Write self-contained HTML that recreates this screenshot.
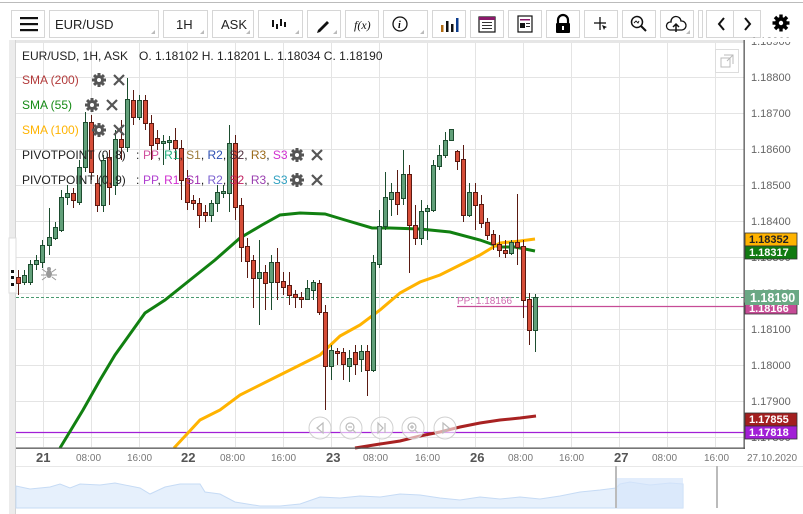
<!DOCTYPE html>
<html><head><meta charset="utf-8"><style>
html,body{margin:0;padding:0;background:#fff;width:803px;height:514px;overflow:hidden;font-family:"Liberation Sans",sans-serif}
svg{position:absolute;left:0;top:0}
</style></head><body>
<svg id="s" width="803" height="514" viewBox="0 0 803 514" font-family="Liberation Sans, sans-serif">
<rect x="0" y="0" width="803" height="514" fill="#fff"/>
<rect x="0" y="2" width="803" height="1" fill="#bbb"/>
<g fill="#fff" stroke="#d6d6d6">
<rect x="11.5" y="10.5" width="33" height="27"/>
<rect x="49.5" y="10.5" width="109" height="27"/>
<rect x="163.5" y="10.5" width="44" height="27"/>
<rect x="212.5" y="10.5" width="41" height="27"/>
<rect x="258.5" y="10.5" width="44" height="27"/>
<rect x="307.5" y="10.5" width="33" height="27"/>
<rect x="345.5" y="10.5" width="33" height="27"/>
<rect x="383.5" y="10.5" width="44" height="27"/>
<rect x="432.5" y="10.5" width="33" height="27"/>
<rect x="470.5" y="10.5" width="33" height="27"/>
<rect x="508.5" y="10.5" width="33" height="27"/>
<rect x="546.5" y="10.5" width="33" height="27"/>
<rect x="584.5" y="10.5" width="33" height="27"/>
<rect x="622.5" y="10.5" width="33" height="27"/>
<rect x="660.5" y="10.5" width="33" height="27"/>
<rect x="698.5" y="10.5" width="4" height="27"/>
<rect x="706.5" y="10.5" width="54" height="27"/>
</g>
<line x1="733.5" y1="11" x2="733.5" y2="37" stroke="#d6d6d6"/>
<g fill="#bbb">
<path d="M155 34 l-4 0 l4 -4z"/><path d="M204 34 l-4 0 l4 -4z"/><path d="M250 34 l-4 0 l4 -4z"/>
<path d="M299 34 l-4 0 l4 -4z"/><path d="M337 34 l-4 0 l4 -4z"/><path d="M424 34 l-4 0 l4 -4z"/><path d="M690 34 l-4 0 l4 -4z"/>
</g>
<g fill="#111"><rect x="20" y="17" width="18" height="2.2"/><rect x="20" y="23" width="18" height="2.2"/><rect x="20" y="29" width="18" height="2.2"/></g>
<text x="55" y="29" font-size="13" fill="#222">EUR/USD</text>
<text x="176" y="29" font-size="13" fill="#222">1H</text>
<text x="221" y="29" font-size="13" fill="#222">ASK</text>
<g fill="#111"><rect x="272" y="20" width="2" height="7"/><rect x="276" y="24" width="2" height="5"/><rect x="280" y="19" width="2" height="7"/><rect x="284" y="22" width="2" height="5"/></g>
<path d="M318 30 l9 -9 l2 2 l-9 9 l-3 1z" fill="#111"/>
<text x="354" y="29" font-size="12" font-style="italic" font-family="Liberation Serif, serif" fill="#111">f(x)</text>
<circle cx="400" cy="24" r="7" fill="none" stroke="#111" stroke-width="1.3"/><text x="398" y="28" font-size="10" font-style="italic" font-family="Liberation Serif,serif" font-weight="bold">i</text>
<g><rect x="441" y="25" width="2.5" height="7" fill="#b06a10"/><rect x="446" y="21" width="2.5" height="11" fill="#111"/><rect x="451" y="24" width="2.5" height="8" fill="#111"/><rect x="456" y="18" width="2.5" height="14" fill="#0b3b8c"/></g>
<rect x="479" y="17" width="16" height="15" fill="#fff" stroke="#111" stroke-width="1.2"/><rect x="479" y="17" width="16" height="3" fill="#8a1a6a"/>
<g fill="#333"><rect x="482" y="22" width="10" height="1"/><rect x="482" y="25" width="10" height="1"/><rect x="482" y="28" width="10" height="1"/></g>
<rect x="518" y="16" width="14" height="16" fill="#fff" stroke="#111" stroke-width="1.2"/><rect x="520" y="19" width="10" height="1.5" fill="#8a1a6a"/><rect x="520" y="23" width="5" height="5" fill="#111"/><rect x="526" y="23" width="4" height="1" fill="#333"/><rect x="526" y="26" width="4" height="1" fill="#333"/>
<path d="M558 23 v-3 a5 5 0 0 1 10 0 v3" fill="none" stroke="#000" stroke-width="2.2"/><rect x="556" y="23" width="14" height="10" rx="1" fill="#000"/><rect x="562" y="26" width="2" height="4" fill="#fff"/>
<g stroke="#111" stroke-width="1.3"><line x1="600" y1="17" x2="600" y2="30"/><line x1="594" y1="23" x2="606" y2="23"/></g><path d="M602 25 l5 2 l-2 1 l-1 2z" fill="#111"/>
<circle cx="637" cy="22" r="5.5" fill="none" stroke="#111" stroke-width="1.5"/><line x1="641" y1="26" x2="646" y2="31" stroke="#111" stroke-width="2"/><path d="M634 23 l2 -2 l2 2 l1 -2" fill="none" stroke="#111" stroke-width="0.9"/>
<path d="M670 30 a4 4 0 0 1 1 -8 a5 5 0 0 1 10 -1 a4 4 0 0 1 1 9z" fill="none" stroke="#111" stroke-width="1.3"/><path d="M676 32 v-7 M673 27 l3 -3 l3 3" fill="none" stroke="#111" stroke-width="1.5"/>
<path d="M724 18 l-5 6 l5 6" fill="none" stroke="#111" stroke-width="2"/><path d="M745 18 l5 6 l-5 6" fill="none" stroke="#111" stroke-width="2"/>
<g transform="translate(781 23)"><circle r="6" fill="#000"/><g fill="#000"><rect x="-1.7" y="-8.5" width="3.4" height="17"/><rect x="-8.5" y="-1.7" width="17" height="3.4"/><rect x="-1.7" y="-8.5" width="3.4" height="17" transform="rotate(45)"/><rect x="-1.7" y="-8.5" width="3.4" height="17" transform="rotate(-45)"/></g><circle r="2.2" fill="#fff"/></g>
<g id="grid" stroke="#e4e4e4" stroke-width="1"></g>
<g id="plabels" font-size="11" fill="#666"></g>
<rect x="9" y="38" width="794" height="4" fill="#fff"/>
<rect x="9" y="40" width="735" height="3" fill="#e6e6e6"/>
<rect x="9" y="40" width="6" height="474" fill="#ececec"/>
<rect x="15" y="40" width="1" height="474" fill="#d4d4d4"/>
<rect x="9" y="238" width="7" height="55" fill="#fff" stroke="#ddd"/>
<g fill="#111"><rect x="11" y="270" width="3" height="3"/><rect x="11" y="276" width="3" height="3"/><rect x="11" y="283" width="3" height="3"/></g>
<line x1="16" y1="432.5" x2="744" y2="432.5" stroke="#a11fd6" stroke-width="1.3"/>
<line x1="16" y1="297.5" x2="744" y2="297.5" stroke="#4a9a70" stroke-dasharray="3,2" stroke-width="1"/>
<line x1="457" y1="306.5" x2="744" y2="306.5" stroke="#c64b96" stroke-width="1.3"/>
<text x="457" y="304" font-size="10" fill="#d06ab0">PP: 1.18166</text>
<polyline fill="none" stroke="#118011" stroke-width="3" points="60,448 83,410 100,380 115,355 145,313 165,300 190,280 215,260 240,238 262,225 280,215 300,213 325,214 345,220 372,228 390,228 420,229 450,232 480,240 500,247 515,247 535,251"/>
<polyline fill="none" stroke="#ffb300" stroke-width="3" points="174,448 200,420 220,410 240,395 280,375 320,355 340,336 360,325 380,310 400,293 420,282 440,275 460,265 480,255 500,243 520,241 535,239"/>
<polyline fill="none" stroke="#a82222" stroke-width="3" points="355,448 380,444 400,441 420,436 440,432 460,427 480,423 500,420 520,418 536,416"/>
<g id="candles"></g>
<g fill="#fff" fill-opacity="0.6" stroke="#d0d0d0">
<circle cx="320" cy="428" r="11"/><circle cx="351" cy="428" r="11"/><circle cx="382" cy="428" r="11"/><circle cx="413" cy="428" r="11"/><circle cx="445" cy="428" r="11"/>
</g>
<g fill="none" stroke="#bbb" stroke-width="1.2">
<path d="M323 423 l-6 5 l6 5z"/><circle cx="350" cy="427" r="4"/><line x1="353" y1="430" x2="356" y2="433"/><line x1="348" y1="427" x2="352" y2="427"/>
<path d="M378 423 l5 5 l-5 5z M385 423 v10"/><circle cx="412" cy="427" r="4"/><line x1="415" y1="430" x2="418" y2="433"/><path d="M410 427 h4 M412 425 v4"/><path d="M443 423 l6 5 l-6 5z"/>
</g>
<rect x="743.5" y="40" width="1.3" height="409" fill="#555"/>
<rect x="16" y="447.5" width="729" height="1.3" fill="#555"/>
<g font-size="11" font-weight="bold">
<rect x="745" y="233" width="52" height="13" fill="#ffb300" stroke="#333" stroke-width="0.8"/><text x="749" y="243" fill="#222">1.18352</text>
<rect x="745" y="246" width="52" height="13" fill="#117a11" stroke="#333" stroke-width="0.8"/><text x="749" y="256" fill="#fff">1.18317</text>
<rect x="745" y="303" width="52" height="11" fill="#c64b96" stroke="#333" stroke-width="0.8"/><text x="749" y="312" fill="#fff">1.18166</text>
<rect x="745" y="290" width="54" height="15" fill="#6aa884"/><text x="750" y="302" font-size="12.5" fill="#fff">1.18190</text>
<rect x="745" y="413" width="52" height="13" fill="#a31f1f" stroke="#333" stroke-width="0.8"/><text x="749" y="423" fill="#fff">1.17855</text>
<rect x="745" y="426" width="52" height="13" fill="#a11fd6" stroke="#333" stroke-width="0.8"/><text x="749" y="436" fill="#fff">1.17818</text>
</g>
<g font-size="10" fill="#777">
<text x="76" y="461">08:00</text><text x="127" y="461">16:00</text><text x="220" y="461">08:00</text><text x="271" y="461">16:00</text>
<text x="363" y="461">08:00</text><text x="415" y="461">16:00</text><text x="508" y="461">08:00</text><text x="559" y="461">16:00</text>
<text x="652" y="461">08:00</text><text x="704" y="461">16:00</text><text x="747" y="461">27.10.2020</text>
</g>
<g font-size="13" font-weight="bold" fill="#555"><text x="36" y="462">21</text><text x="181" y="462">22</text><text x="326" y="462">23</text><text x="470" y="462">26</text><text x="614" y="462">27</text></g>
<rect x="16" y="466" width="787" height="1" fill="#e8e8e8"/>
<path d="M16 508 V486 L30 489 L50 487 L60 484 L70 488 L80 484 L100 485 L115 483 L140 488 L150 494 L165 487 L180 484 L200 484 L205 492 L220 494 L235 502 L260 506 L280 506 L300 504 L320 497 L340 498 L360 496 L380 497 L400 494 L420 495 L440 498 L460 500 L480 497 L500 499 L520 497 L540 499 L560 496 L580 492 L600 490 L616 488 L620 484 L630 482 L650 485 L670 483 L683 484 V508Z" fill="#e6f0fc" stroke="#c6dbf5"/>
<rect x="616" y="478" width="67" height="30" fill="#d6e6fb" opacity="0.7"/>
<rect x="615" y="466" width="2" height="42" fill="#bbb"/><rect x="716" y="466" width="2" height="42" fill="#bbb"/>
<g font-size="12">
<text y="60" fill="#222"><tspan x="22">EUR/USD, 1H, ASK</tspan><tspan x="139">O. 1.18102 H. 1.18201 L. 1.18034 C. 1.18190</tspan></text>
<text x="22" y="84" fill="#b23a3a">SMA (200)</text>
<text x="22" y="109" fill="#148a14">SMA (55)</text>
<text x="22" y="134" fill="#ffb300">SMA (100)</text>
<text y="159" fill="#222"><tspan x="22">PIVOTPOINT (0, 8)</tspan><tspan x="136">: </tspan><tspan x="143" fill="#d04f9e">PP</tspan>, <tspan fill="#1fae7a">R1</tspan>, <tspan fill="#9b7a3a">S1</tspan>, <tspan fill="#2c4fb2">R2</tspan>, <tspan fill="#4b2a3a">S2</tspan>, <tspan fill="#9b6a1a">R3</tspan>, <tspan fill="#d02fd0">S3</tspan></text>
<text y="184" fill="#222"><tspan x="22">PIVOTPOINT (0, 9)</tspan><tspan x="136">: </tspan><tspan x="143" fill="#b03fd0">PP</tspan>, <tspan fill="#d02fd0">R1</tspan>, <tspan fill="#a02fb0">S1</tspan>, <tspan fill="#7a5fd0">R2</tspan>, <tspan fill="#c02060">S2</tspan>, <tspan fill="#9a3fb0">R3</tspan>, <tspan fill="#2fa0c0">S3</tspan></text>
</g>
<g id="icons"></g>
<rect x="715.5" y="49.5" width="23" height="23" fill="#fff" stroke="#ddd"/>
<rect x="721" y="58" width="9" height="9" fill="none" stroke="#bbb"/><path d="M724 55 h9 v9 M727 61 l6 -6" fill="none" stroke="#bbb"/>
<g transform="translate(49 274)" fill="#999"><ellipse rx="3" ry="4"/><circle cy="-5" r="2"/><path d="M-3 -2 l-4 -3 M3 -2 l4 -3 M-3 1 l-5 0 M3 1 l5 0 M-3 3 l-4 3 M3 3 l4 3" stroke="#999" stroke-width="1"/></g>
</svg>
<script>
var NS="http://www.w3.org/2000/svg",s=document.getElementById('s');
function el(p,t,a){var e=document.createElementNS(NS,t);for(var k in a)e.setAttribute(k,a[k]);p.appendChild(e);return e;}
var g=document.getElementById('grid');
for(var x=43;x<744;x+=48)el(g,'line',{x1:x+.5,y1:43,x2:x+.5,y2:447});
var ys=[41,77,113,149,185,221,257,293,329,365,401,437];
for(var i=0;i<ys.length;i++){el(g,'line',{x1:16,y1:ys[i]+.5,x2:744,y2:ys[i]+.5});}
var pl=document.getElementById('plabels');
var pv=['1.18900','1.18800','1.18700','1.18600','1.18500','1.18400','1.18300','1.18200','1.18100','1.18000','1.17900','1.17800'];
for(i=0;i<ys.length;i++){var t=el(pl,'text',{x:751,y:ys[i]+4});t.textContent=pv[i];}
var d=[[18,277,283,270,295],[24,282,275,270,285],[30,282,264,260,285],[36,264,260,255,270],[42,262,245,240,268],[49,245,237,208,255],[55,238,227,222,240],[61,230,197,190,232],[67,197,193,185,205],[73,193,200,188,208],[79,202,167,160,205],[85,167,122,112,172],[91,122,172,115,180],[97,183,205,175,212],[103,205,160,155,212],[109,157,187,150,205],[115,185,139,130,195],[121,139,147,120,160],[127,147,99,78,152],[133,100,117,90,125],[139,117,100,95,120],[145,100,123,95,130],[151,123,145,115,160],[157,138,143,130,150],[163,143,141,135,165],[169,142,140,136,150],[175,140,148,128,160],[181,148,180,140,200],[187,178,202,170,210],[193,200,203,195,210],[199,203,215,198,228],[205,212,215,205,222],[211,215,203,200,222],[217,203,192,185,212],[223,193,191,185,198],[229,193,143,125,212],[235,143,207,135,220],[241,205,247,198,262],[247,246,261,238,278],[253,260,278,255,308],[259,278,272,240,325],[265,272,283,265,310],[271,282,262,255,310],[277,262,282,248,300],[283,281,287,272,295],[289,285,295,272,305],[295,294,297,290,308],[301,297,299,292,308],[307,299,288,280,300],[313,290,282,280,300],[319,283,312,280,315],[325,312,366,305,410],[331,366,350,345,380],[337,351,352,348,365],[343,352,364,348,380],[349,366,358,350,382],[355,352,364,345,375],[361,359,351,345,372],[367,351,370,345,396],[373,370,262,255,372],[379,264,226,210,268],[385,226,197,172,230],[391,199,192,183,216],[397,192,204,170,215],[403,198,174,150,205],[409,174,225,165,273],[415,225,238,205,245],[421,238,211,200,245],[427,211,208,205,240],[433,210,165,160,212],[439,166,155,145,170],[445,155,140,132,158],[451,140,129,129,140],[457,151,161,150,170],[463,159,215,145,222],[469,215,192,183,217],[475,192,205,183,230],[481,204,223,195,228],[487,222,235,218,240],[493,234,244,230,250],[499,244,250,235,257],[505,250,253,240,258],[511,253,242,240,255],[517,242,247,194,265],[523,246,300,240,318],[529,299,330,293,345],[535,330,297,294,352]];
var cg=document.getElementById('candles');
d.forEach(function(c){var up=c[2]<c[1];var dark=up?'#1d4d2f':'#5a1a12';
el(cg,'line',{x1:c[0]+.5,y1:c[3],x2:c[0]+.5,y2:c[4],stroke:dark,'stroke-width':1});
var top=Math.min(c[1],c[2]),h=Math.max(2,Math.abs(c[2]-c[1]));
el(cg,'rect',{x:c[0]-1.5,y:top+.5,width:4,height:h,fill:up?'#62a07a':'#d64d38',stroke:dark,'stroke-width':1});});
var ic=document.getElementById('icons');
function gear(x,y){var gg=el(ic,'g',{transform:'translate('+x+' '+y+')',fill:'#555'});el(gg,'circle',{r:5});
for(var a=0;a<180;a+=45)el(gg,'rect',{x:-1.5,y:-7,width:3,height:14,transform:'rotate('+a+')'});el(gg,'circle',{r:2,fill:'#fff'});}
function xx(x,y){el(ic,'path',{d:'M'+(x-5)+' '+(y-5)+' l10 10 M'+(x+5)+' '+(y-5)+' l-10 10',stroke:'#555','stroke-width':2.2});}
gear(99,80);xx(119,80);gear(92,105);xx(112,105);gear(99,130);xx(119,130);gear(297,155);xx(317,155);gear(297,180);xx(317,180);
</script>
</body></html>
